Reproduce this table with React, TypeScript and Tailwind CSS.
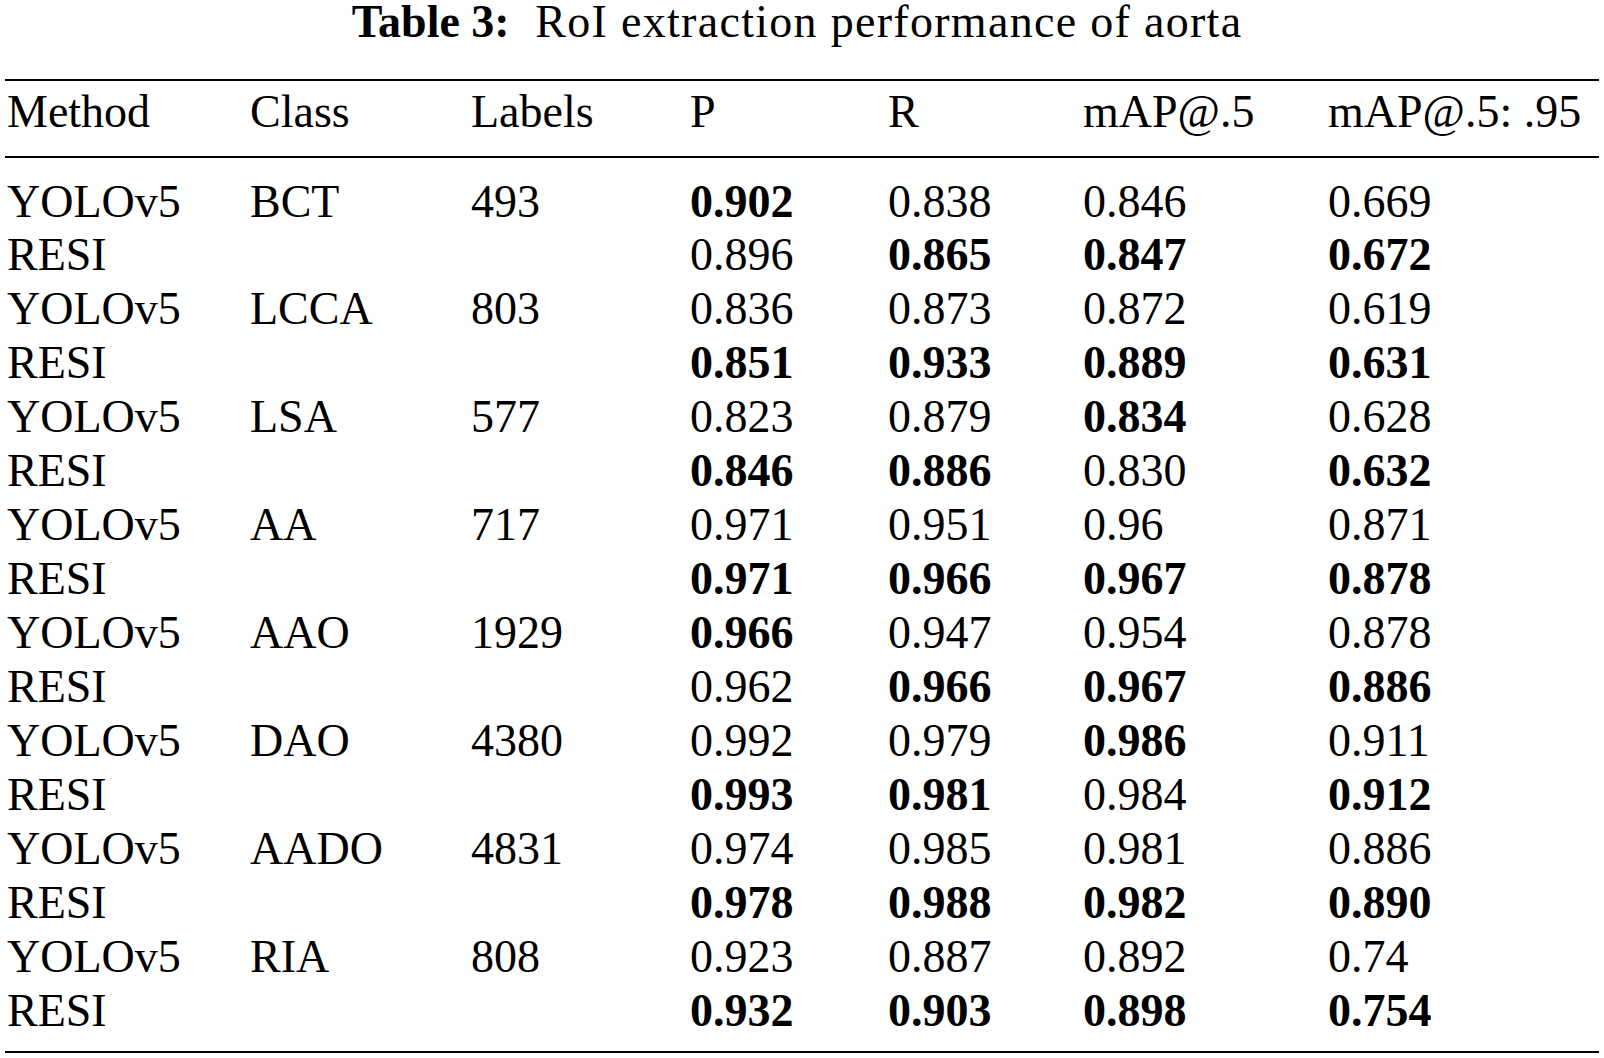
const header = ["Method", "Class", "Labels", "P", "R", "mAP@.5", "mAP@.5: .95"];

// "*" marks a bold (best) value
const rows: string[][] = [
  ["YOLOv5", "BCT", "493", "*0.902", "0.838", "0.846", "0.669"],
  ["RESI", "", "", "0.896", "*0.865", "*0.847", "*0.672"],
  ["YOLOv5", "LCCA", "803", "0.836", "0.873", "0.872", "0.619"],
  ["RESI", "", "", "*0.851", "*0.933", "*0.889", "*0.631"],
  ["YOLOv5", "LSA", "577", "0.823", "0.879", "*0.834", "0.628"],
  ["RESI", "", "", "*0.846", "*0.886", "0.830", "*0.632"],
  ["YOLOv5", "AA", "717", "0.971", "0.951", "0.96", "0.871"],
  ["RESI", "", "", "*0.971", "*0.966", "*0.967", "*0.878"],
  ["YOLOv5", "AAO", "1929", "*0.966", "0.947", "0.954", "0.878"],
  ["RESI", "", "", "0.962", "*0.966", "*0.967", "*0.886"],
  ["YOLOv5", "DAO", "4380", "0.992", "0.979", "*0.986", "0.911"],
  ["RESI", "", "", "*0.993", "*0.981", "0.984", "*0.912"],
  ["YOLOv5", "AADO", "4831", "0.974", "0.985", "0.981", "0.886"],
  ["RESI", "", "", "*0.978", "*0.988", "*0.982", "*0.890"],
  ["YOLOv5", "RIA", "808", "0.923", "0.887", "0.892", "0.74"],
  ["RESI", "", "", "*0.932", "*0.903", "*0.898", "*0.754"],
];

const cols = "grid grid-cols-[243px_221px_219px_198px_195px_245px_1fr]";

const App = () => {
  return (
    <div className="min-h-screen bg-white text-black font-['Liberation_Serif','Times_New_Roman',serif] text-[46px]">
      <div className="px-[5px]">
        {/* Caption */}
        <div className="text-center leading-[44px] whitespace-pre pr-[10px]">
          <span className="font-bold">Table 3:</span>
          <span className="tracking-[1.3px]">{"  RoI extraction performance of aorta"}</span>
        </div>

        <div className="mt-[35px] border-t-2 border-b-2 border-black">
          {/* Header */}
          <div className={`${cols} pl-[2px] pt-[3.5px] pb-[17.5px] border-b-2 border-black leading-[54px]`}>
            {header.map((h) => (
              <div key={h} className="whitespace-nowrap">{h}</div>
            ))}
          </div>

          {/* Body */}
          <div className="pt-[16.5px] pb-[13.5px]">
            {rows.map((r, i) => (
              <div key={i} className={`${cols} pl-[2px] h-[53.94px] leading-[53.94px]`}>
                {r.map((c, j) => (
                  <div key={j} className={c.startsWith("*") ? "font-bold whitespace-nowrap" : "whitespace-nowrap"}>
                    {c.replace("*", "")}
                  </div>
                ))}
              </div>
            ))}
          </div>
        </div>
      </div>
    </div>
  );
};

export default App;
